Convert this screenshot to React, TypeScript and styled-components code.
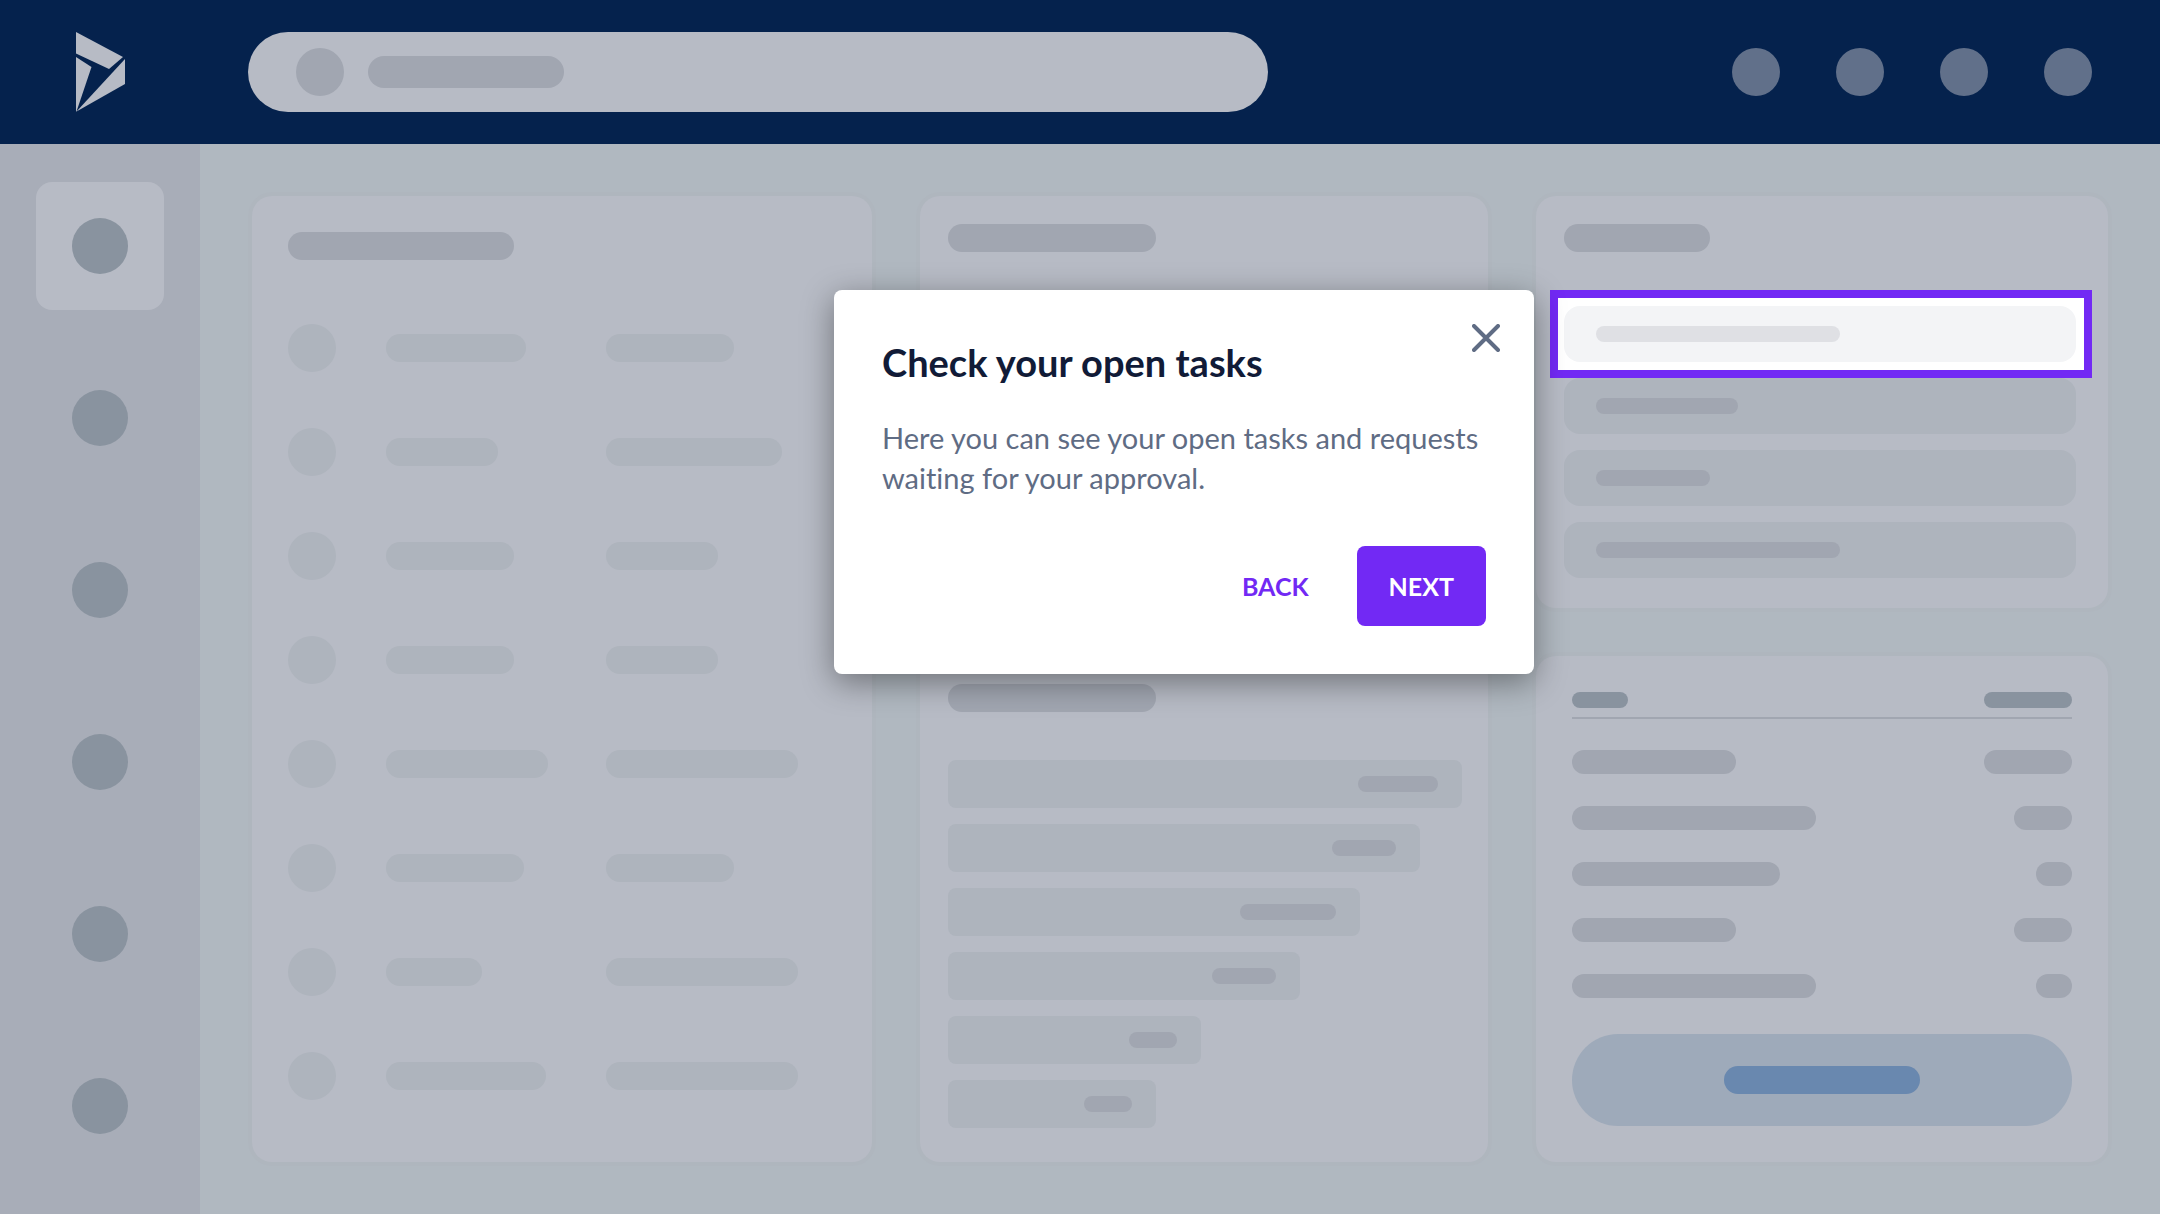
import React from "react";
import styled, { createGlobalStyle } from "styled-components";

const color = {
  navy: "#05224d",
  page: "#b0b8c0",
  card: "#b7bbc5",
  edge: "#afb6be",
  rail: "#a8adb8",
  faint: "#aeb4bd",
  muted: "#a1a6b1",
  strong: "#89939f",
  avatar: "#61708a",
  cta: "#9eaaba",
  ctaText: "#6988af",
  violet: "#7229f4",
  ink: "#111b37",
  slate: "#5f6c84",
};

const GlobalStyle = createGlobalStyle`
  *, *::before, *::after { box-sizing: border-box; }
  body {
    margin: 0;
    background: ${color.page};
    font-family: Lato, "Open Sans", sans-serif;
    font-variant-ligatures: none;
  }
  button { border: 0; padding: 0; font: inherit; cursor: pointer; }
  ul { list-style: none; margin: 0; padding: 0; }
`;

const Page = styled.div`
  min-height: 100vh;
  display: flex;
  flex-direction: column;
`;

const Header = styled.header`
  display: flex;
  align-items: center;
  height: 144px;
  padding-right: 68px;
  background: ${color.navy};
`;

const LogoLink = styled.a`
  display: flex;
  flex: 0 0 248px;
  padding-left: 76px;
`;

const Search = styled.label`
  display: flex;
  align-items: center;
  flex: 0 1 1020px;
  height: 80px;
  padding: 0 48px;
  gap: 24px;
  border-radius: 40px;
  background: ${color.card};
`;

const SearchInput = styled.input`
  flex: 1;
  min-width: 0;
  border: 0;
  outline: 0;
  background: transparent;
  font: inherit;
  font-size: 28px;
`;

const Shortcuts = styled.div`
  display: flex;
  gap: 56px;
  margin-left: auto;
`;

const Shortcut = styled.button`
  width: 48px;
  height: 48px;
  border-radius: 50%;
  background: ${color.avatar};
`;

const Dot = styled.span<{ $size: number; $tone: string }>`
  flex: none;
  width: ${(p) => p.$size}px;
  height: ${(p) => p.$size}px;
  border-radius: 50%;
  background: ${(p) => p.$tone};
`;

const Bar = styled.span<{ $w: number; $h: number; $tone?: string }>`
  display: block;
  flex: none;
  width: ${(p) => p.$w}px;
  height: ${(p) => p.$h}px;
  border-radius: ${(p) => p.$h / 2}px;
  background: ${(p) => p.$tone ?? color.muted};
`;

const Body = styled.div`
  flex: 1;
  display: flex;
`;

const Rail = styled.nav`
  flex: 0 0 200px;
  display: flex;
  flex-direction: column;
  align-items: center;
  gap: 44px;
  padding-top: 38px;
  background: ${color.rail};
`;

const RailButton = styled.button<{ $active: boolean }>`
  display: grid;
  place-items: center;
  width: 128px;
  height: 128px;
  border-radius: 16px;
  background: ${(p) => (p.$active ? color.card : "transparent")};
`;

const Board = styled.main`
  flex: 1;
  display: grid;
  grid-template-columns: 620fr 568fr 572fr;
  grid-template-rows: auto 1fr;
  gap: 48px;
  padding: 52px;
`;

const Card = styled.section<{ $pad: string; $tall?: boolean }>`
  grid-row: ${(p) => (p.$tall ? "span 2" : "auto")};
  min-width: 0;
  padding: ${(p) => p.$pad};
  border-radius: 20px;
  background: ${color.card};
  box-shadow: 0 0 0 4px ${color.edge};
`;

const People = styled.ul`
  display: grid;
  gap: 56px;
  margin-top: 64px;
`;

const Person = styled.li`
  display: grid;
  grid-template-columns: 98px 220px 1fr;
  align-items: center;
`;

const Chart = styled.ul`
  display: grid;
  gap: 16px;
  margin-top: 48px;
`;

const ChartBar = styled.li<{ $w: number }>`
  display: flex;
  align-items: center;
  justify-content: flex-end;
  width: ${(p) => p.$w}px;
  height: 48px;
  padding-right: 24px;
  border-radius: 8px;
  background: ${color.faint};
`;

const Tasks = styled.ul`
  display: grid;
  gap: 16px;
  margin-top: 54px;
`;

const Task = styled.li<{ $active: boolean }>`
  position: relative;
  z-index: ${(p) => (p.$active ? 1 : 0)};
`;

const TaskFace = styled.div<{ $active: boolean }>`
  position: relative;
  display: flex;
  align-items: center;
  height: 56px;
  padding: 0 32px;
  border-radius: 16px;
  background: ${(p) => (p.$active ? "#f3f4f6" : color.faint)};
`;

const Spotlight = styled.div`
  position: absolute;
  inset: -16px -16px -16px -14px;
  border: 8px solid ${color.violet};
  background: #fff;
`;

const Summary = styled.div`
  display: flex;
  flex-direction: column;
`;

const SummaryHead = styled.div`
  display: flex;
  justify-content: space-between;
  padding-bottom: 9px;
  border-bottom: 2px solid ${color.muted};
`;

const SummaryRows = styled.ul`
  display: grid;
  gap: 32px;
  margin: 31px 0 36px;
`;

const SummaryRow = styled.li`
  display: flex;
  justify-content: space-between;
`;

const Cta = styled.button`
  display: grid;
  place-items: center;
  height: 92px;
  border-radius: 46px;
  background: ${color.cta};
`;

const Popover = styled.div`
  position: absolute;
  top: -16px;
  right: calc(100% + 30px);
  width: 700px;
  padding: 48px;
  border-radius: 8px;
  background: #fff;
  box-shadow: 0 8px 32px rgba(0, 0, 0, 0.4);
`;

const Close = styled.button`
  position: absolute;
  top: 24px;
  right: 24px;
  display: grid;
  place-items: center;
  width: 48px;
  height: 48px;
  background: transparent;
`;

const Title = styled.h2`
  margin: 0;
  color: ${color.ink};
  font-size: 38px;
  line-height: 48px;
  font-weight: 700;
`;

const Text = styled.p`
  margin: 32px 0 48px;
  color: ${color.slate};
  font-size: 29px;
  line-height: 40px;
`;

const Actions = styled.div`
  display: flex;
  justify-content: flex-end;
  gap: 16px;
`;

const Action = styled.button<{ $primary?: boolean }>`
  height: 80px;
  border-radius: 8px;
  background: ${(p) => (p.$primary ? color.violet : "transparent")};
  color: ${(p) => (p.$primary ? "#fff" : color.violet)};

  && {
    padding: 0 32px;
    font-size: 25px;
    font-weight: 700;
  }
`;

const people = [
  [140, 128],
  [112, 176],
  [128, 112],
  [128, 112],
  [162, 192],
  [138, 128],
  [96, 192],
  [160, 192],
];

const chart = [
  [514, 80],
  [472, 64],
  [412, 96],
  [352, 64],
  [253, 48],
  [208, 48],
];

const tasks = [244, 142, 114, 244];

const summary = [
  [164, 88],
  [244, 58],
  [208, 36],
  [164, 58],
  [244, 36],
];

const railItems = ["Home", "Accounts", "Contacts", "Orders", "Reports", "Settings"];
const shortcuts = ["Add", "Alerts", "Help", "Profile"];

function Logo() {
  return (
    <svg width="50" height="80" viewBox="0 0 50 80" fill={color.card} aria-hidden="true">
      <path d="M0 0 L47 25 L33 37 L0 21.500 Z" />
      <path d="M0 25 L15.500 35 L0.500 79.500 L0 79.500 Z" />
      <path d="M49 27 V52 L0.500 79.500 Z" />
    </svg>
  );
}

function TourStep() {
  return (
    <Popover role="dialog" aria-labelledby="tour-title">
      <Close type="button" aria-label="Close">
        <svg width="28" height="28" viewBox="0 0 28 28" aria-hidden="true">
          <path
            d="M2 2 L26 26 M26 2 L2 26"
            stroke={color.slate}
            strokeWidth="4"
            strokeLinecap="round"
          />
        </svg>
      </Close>
      <Title id="tour-title">Check your open tasks</Title>
      <Text>Here you can see your open tasks and requests waiting for your approval.</Text>
      <Actions>
        <Action type="button">BACK</Action>
        <Action type="button" $primary>
          NEXT
        </Action>
      </Actions>
    </Popover>
  );
}

export default function App() {
  return (
    <Page>
      <GlobalStyle />
      <Header>
        <LogoLink href="#" aria-label="Dynamics">
          <Logo />
        </LogoLink>
        <Search>
          <Dot $size={48} $tone={color.muted} />
          <Bar $w={196} $h={32} />
          <SearchInput type="search" aria-label="Search" />
        </Search>
        <Shortcuts>
          {shortcuts.map((name) => (
            <Shortcut key={name} type="button" aria-label={name} />
          ))}
        </Shortcuts>
      </Header>
      <Body>
        <Rail>
          {railItems.map((name, i) => (
            <RailButton key={name} type="button" aria-label={name} $active={i === 0}>
              <Dot $size={56} $tone={color.strong} />
            </RailButton>
          ))}
        </Rail>
        <Board>
          <Card $pad="36px" $tall>
            <Bar $w={226} $h={28} />
            <People>
              {people.map(([first, second], i) => (
                <Person key={i}>
                  <Dot $size={48} $tone={color.faint} />
                  <Bar $w={first} $h={28} $tone={color.faint} />
                  <Bar $w={second} $h={28} $tone={color.faint} />
                </Person>
              ))}
            </People>
          </Card>
          <Card $pad="28px">
            <Bar $w={208} $h={28} />
          </Card>
          <Card $pad="28px 32px 30px 28px">
            <Bar $w={146} $h={28} />
            <Tasks>
              {tasks.map((w, i) => (
                <Task key={i} $active={i === 0}>
                  {i === 0 && <Spotlight />}
                  <TaskFace $active={i === 0}>
                    <Bar $w={w} $h={16} $tone={i === 0 ? "#dfe0e4" : color.muted} />
                  </TaskFace>
                  {i === 0 && <TourStep />}
                </Task>
              ))}
            </Tasks>
          </Card>
          <Card $pad="28px">
            <Bar $w={208} $h={28} />
            <Chart>
              {chart.map(([w, label], i) => (
                <ChartBar key={i} $w={w}>
                  <Bar $w={label} $h={16} />
                </ChartBar>
              ))}
            </Chart>
          </Card>
          <Card $pad="36px">
            <Summary>
              <SummaryHead>
                <Bar $w={56} $h={16} $tone={color.strong} />
                <Bar $w={88} $h={16} $tone={color.strong} />
              </SummaryHead>
              <SummaryRows>
                {summary.map(([label, value], i) => (
                  <SummaryRow key={i}>
                    <Bar $w={label} $h={24} />
                    <Bar $w={value} $h={24} />
                  </SummaryRow>
                ))}
              </SummaryRows>
              <Cta type="button" aria-label="Confirm">
                <Bar $w={196} $h={28} $tone={color.ctaText} />
              </Cta>
            </Summary>
          </Card>
        </Board>
      </Body>
    </Page>
  );
}
